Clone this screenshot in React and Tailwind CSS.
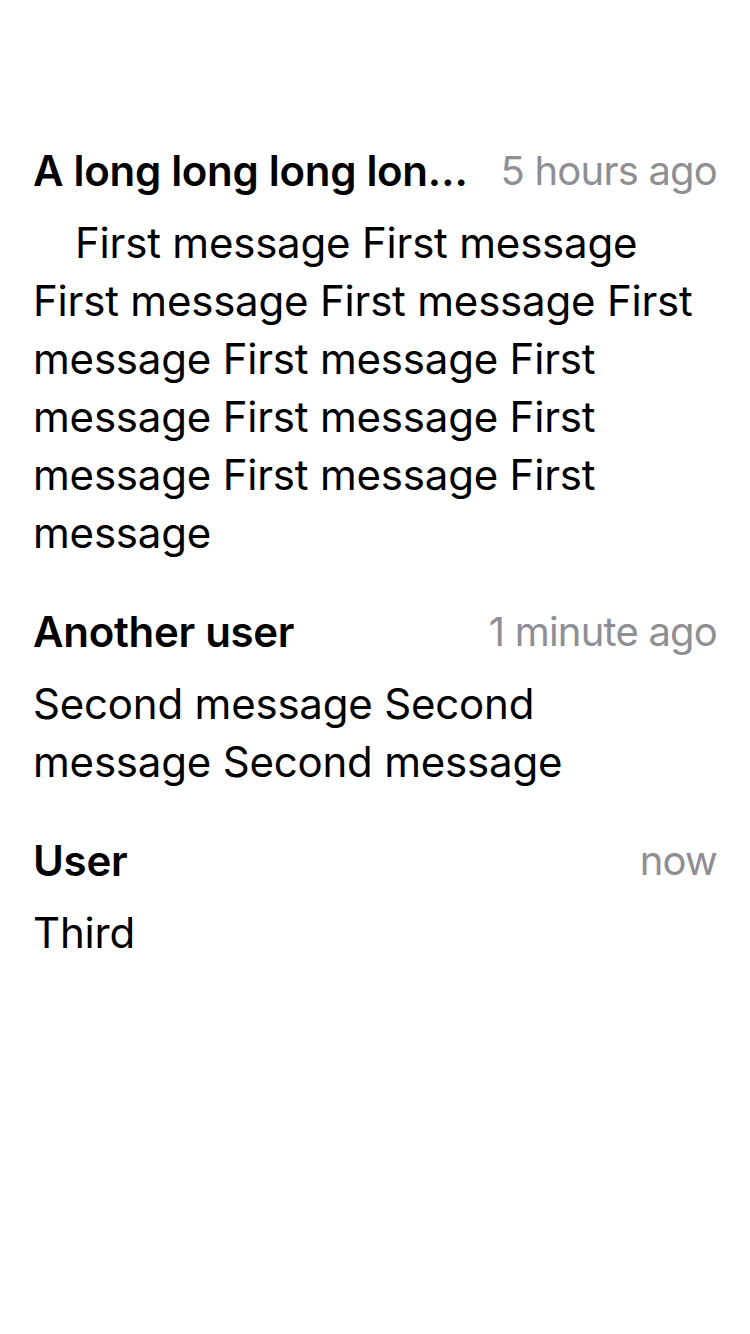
import React from 'react'

const messages = [
  {
    user: 'A long long long long long long long name',
    time: '5 hours ago',
    indent: true,
    text: 'First message First message First message First message First message First message First message First message First message First message First message',
  },
  {
    user: 'Another user',
    time: '1 minute ago',
    text: 'Second message Second message Second message',
  },
  {
    user: 'User',
    time: 'now',
    text: 'Third',
  },
]

export default function App() {
  return (
    <div
      className="min-h-screen w-full bg-white px-[33px] pt-[142px] text-black"
      style={{ fontFamily: 'Inter, "Liberation Sans", sans-serif' }}
    >
      <div className="flex flex-col gap-[41px]">
        {messages.map((m, i) => (
          <div key={i} className="flex flex-col gap-[14px]">
            {/* header row: name + time */}
            <div className="flex items-center leading-[58px]">
              <span className="min-w-0 flex-1 truncate text-[42px] font-semibold tracking-[-0.3px]">{m.user}</span>
              <span className="ml-[30px] shrink-0 text-[40px] tracking-[-0.8px] text-[#8e8e93]">{m.time}</span>
            </div>
            <p className={m.indent ? 'indent-[42px] text-[42px] leading-[58px] tracking-[-0.2px]' : 'text-[42px] leading-[58px] tracking-[-0.2px]'}>
              {m.text}
            </p>
          </div>
        ))}
      </div>
    </div>
  )
}
